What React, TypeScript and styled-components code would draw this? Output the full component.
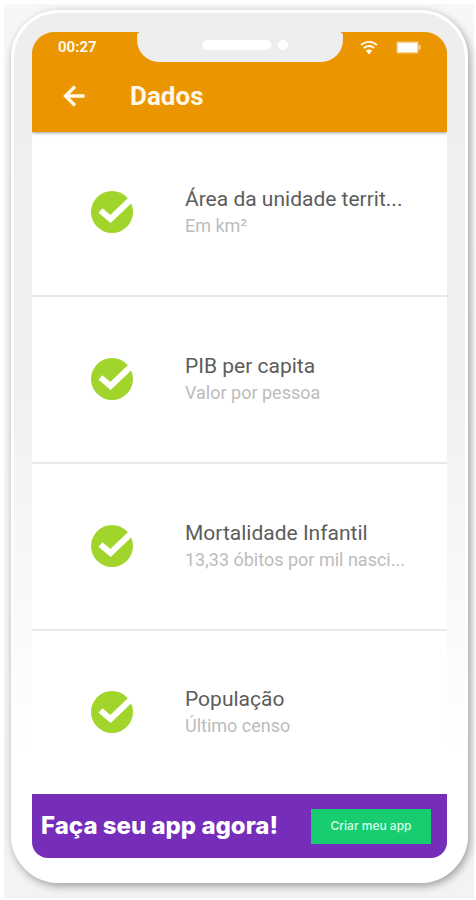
import React from "react";
import styled, { createGlobalStyle } from "styled-components";

const GlobalStyle = createGlobalStyle`
  *, *::before, *::after { box-sizing: border-box; }
  body {
    margin: 0;
    background: #ffffff;
    font-family: Roboto, "Noto Sans", sans-serif;
  }
`;

const Stage = styled.div`
  display: flex;
  min-height: 100vh;
  padding: 4px 2px 2px 4px;
`;

const Backdrop = styled.div`
  flex: 1;
  display: flex;
  justify-content: center;
  min-width: 0;
  padding: 6px 6px 15px 7px;
  background: linear-gradient(#f7f7f7, #f3f3f3);
`;

const Phone = styled.div`
  flex: 1;
  display: flex;
  min-width: 0;
  max-width: 560px;
  padding: 19px 18px 22px;
  border: 3px solid #ffffff;
  border-radius: 48px;
  background: linear-gradient(#eeeeee 0%, #f1f1f1 45%, #ffffff 85%);
  box-shadow: 2px 3px 8px rgba(0, 0, 0, 0.36);
`;

const Screen = styled.div`
  flex: 1;
  display: flex;
  flex-direction: column;
  min-width: 0;
  overflow: hidden;
  border-radius: 22px 22px 16px 16px;
  background: #ffffff;
`;

const Header = styled.header`
  position: relative;
  z-index: 1;
  margin-bottom: -2px;
  background: #eb9500;
  color: #fff8e8;
  box-shadow: 0 1px 3px rgba(0, 0, 0, 0.4);
`;

const StatusBar = styled.div`
  display: grid;
  grid-template-columns: 1fr 206px 1fr;
  height: 30px;
`;

const Clock = styled.time`
  align-self: center;
  padding-left: 26px;
  font: 700 15px/16px Roboto, sans-serif;
`;

const Notch = styled.div`
  display: flex;
  align-items: center;
  justify-content: center;
  gap: 7px;
  padding: 0 0 5px 10px;
  border-radius: 4px 4px 22px 22px;
  background: #eeeeee;
`;

const Speaker = styled.span`
  width: 69px;
  height: 10px;
  border-radius: 5px;
  background: #ffffff;
`;

const Camera = styled.span`
  width: 10px;
  height: 10px;
  border-radius: 50%;
  background: #ffffff;
`;

const StatusIcons = styled.div`
  display: flex;
  align-items: center;
  justify-content: flex-end;
  gap: 18px;
  padding-right: 26px;
`;

const TitleBar = styled.div`
  display: flex;
  align-items: center;
  gap: 38px;
  height: 70px;
  padding: 0 26px 2px;
`;

const BackButton = styled.button`
  display: flex;
  padding: 0;
  border: 0;
  background: none;
  color: inherit;
  cursor: pointer;
`;

const Title = styled.h1`
  margin: 0;
  font-size: 26px;
  line-height: 32px;
  font-weight: 700;
`;

const List = styled.ul`
  flex: 1;
  margin: 0;
  padding: 0;
  list-style: none;
`;

const Row = styled.li`
  display: flex;
  align-items: center;
  gap: 52px;
  height: 167px;
  padding: 0 36px 2px 59px;
  border-bottom: 2px solid #e9e9e9;

  &:last-child {
    height: 163px;
    border-bottom: 0;
  }
`;

const RowText = styled.div`
  min-width: 0;
`;

const Line = styled.p<{ $muted?: boolean }>`
  margin: 0;
  overflow: hidden;
  white-space: nowrap;
  text-overflow: ellipsis;
  font-size: ${(p) => (p.$muted ? 18 : 21)}px;
  line-height: ${(p) => (p.$muted ? 26 : 28)}px;
  color: ${(p) => (p.$muted ? "#bcbcbc" : "#5c5c5c")};
`;

const Banner = styled.footer`
  display: flex;
  align-items: center;
  justify-content: space-between;
  gap: 12px;
  min-height: 64px;
  padding: 0 16px 0 9px;
  background: #752dba;
`;

const Slogan = styled.strong`
  font: 800 24px/30px Inter, sans-serif;
  color: #ffffff;
  white-space: nowrap;
`;

const CreateButton = styled.button`
  flex: none;
  width: 120px;
  height: 35px;
  padding: 0;
  border: 0;
  background: #17cd70;
  color: #d9ffe9;
  font: 500 12px/16px Inter, sans-serif;
  cursor: pointer;
`;

const IconSvg = styled.svg`
  flex: none;
`;

const CheckIcon = () => (
  <IconSvg width="42" height="42" viewBox="0 0 42 42" aria-hidden="true">
    <circle cx="21" cy="21" r="21" fill="#a2d52b" />
    <path d="M9.500 19.500 19.500 28 41 7.500" fill="none" stroke="#ffffff" strokeWidth="6" />
  </IconSvg>
);

const ArrowIcon = () => (
  <IconSvg width="34" height="34" viewBox="0 0 34 34" fill="none" stroke="currentColor" strokeWidth="3.400" aria-hidden="true">
    <path d="M26.5 17H7.5M17 7.5 7.5 17l9.500 9.500" />
  </IconSvg>
);

const WifiIcon = () => (
  <IconSvg width="18" height="15" viewBox="0 0 18 15" fill="none" stroke="currentColor" strokeWidth="1.900" aria-hidden="true">
    <path d="M1 5.200C5.500.7 12.500.7 17 5.200M3.800 8.200c2.900-2.900 7.500-2.900 10.400 0" />
    <path d="M9 14.500 5.700 10.700c1.900-1.700 4.700-1.700 6.600 0Z" fill="currentColor" stroke="none" />
  </IconSvg>
);

const BatteryIcon = () => (
  <IconSvg width="25" height="13" viewBox="0 0 25 13" aria-hidden="true">
    <rect x="0.500" y="0.500" width="22" height="12" rx="1" fill="#f8cf88" />
    <rect x="2" y="2" width="19" height="9" fill="#ffffff" />
    <rect x="22.500" y="4" width="2" height="5" fill="#f8cf88" />
  </IconSvg>
);

const items = [
  { title: "Área da unidade territ...", detail: "Em km²" },
  { title: "PIB per capita", detail: "Valor por pessoa" },
  { title: "Mortalidade Infantil", detail: "13,33 óbitos por mil nasci..." },
  { title: "População", detail: "Último censo" },
];

export default function App() {
  return (
    <Stage>
      <GlobalStyle />
      <Backdrop>
        <Phone>
          <Screen>
            <Header>
              <StatusBar>
                <Clock>00:27</Clock>
                <Notch>
                  <Speaker />
                  <Camera />
                </Notch>
                <StatusIcons>
                  <WifiIcon />
                  <BatteryIcon />
                </StatusIcons>
              </StatusBar>
              <TitleBar>
                <BackButton type="button" aria-label="Voltar">
                  <ArrowIcon />
                </BackButton>
                <Title>Dados</Title>
              </TitleBar>
            </Header>
            <List>
              {items.map((item) => (
                <Row key={item.title}>
                  <CheckIcon />
                  <RowText>
                    <Line>{item.title}</Line>
                    <Line $muted>{item.detail}</Line>
                  </RowText>
                </Row>
              ))}
            </List>
            <Banner>
              <Slogan>Faça seu app agora!</Slogan>
              <CreateButton type="button">Criar meu app</CreateButton>
            </Banner>
          </Screen>
        </Phone>
      </Backdrop>
    </Stage>
  );
}
